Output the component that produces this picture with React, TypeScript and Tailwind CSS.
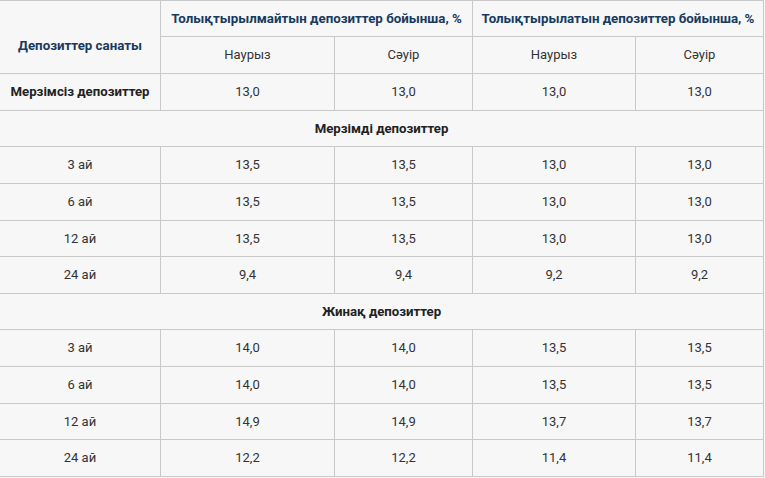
import React from "react";

const rowsA = [
  ["3 ай", "13,5", "13,5", "13,0", "13,0"],
  ["6 ай", "13,5", "13,5", "13,0", "13,0"],
  ["12 ай", "13,5", "13,5", "13,0", "13,0"],
  ["24 ай", "9,4", "9,4", "9,2", "9,2"],
];
const rowsB = [
  ["3 ай", "14,0", "14,0", "13,5", "13,5"],
  ["6 ай", "14,0", "14,0", "13,5", "13,5"],
  ["12 ай", "14,9", "14,9", "13,7", "13,7"],
  ["24 ай", "12,2", "12,2", "11,4", "11,4"],
];

const cell = "flex items-center justify-center border-r border-b border-[#c9c9c9] text-center";

function DataRow({ r }: { r: string[] }) {
  return (
    <>
      {r.map((v, i) => (
        <div key={i} className={`${cell} text-[#333333]`}>
          {v}
        </div>
      ))}
    </>
  );
}

export default function App() {
  return (
    <div className="w-[765px] h-[478px] bg-[#f7f7f7]" style={{ fontFamily: "Roboto, 'Noto Sans', sans-serif" }}>
      <div
        className="grid w-[764px] border-t border-[#c9c9c9] text-[13px] bg-[#f7f7f7]"
        style={{
          gridTemplateColumns: "161px 174px 138px 163px 128px",
          gridTemplateRows: "36px 37px 37px 36px 37px 37px 36px 37px 36px 37px 37px 36px 37px",
        }}
      >
        <div className={`${cell} row-span-2 font-bold text-[13.3px] text-[#173a5e] pt-[17px]`}>Депозиттер санаты</div>
        <div className={`${cell} col-span-2 font-bold text-[13.3px] text-[#173a5e]`}>Толықтырылмайтын депозиттер бойынша, %</div>
        <div className={`${cell} col-span-2 font-bold text-[13.3px] text-[#173a5e]`}>Толықтырылатын депозиттер бойынша, %</div>
        <div className={`${cell} text-[#333333]`}>Наурыз</div>
        <div className={`${cell} text-[#333333]`}>Сәуір</div>
        <div className={`${cell} text-[#333333]`}>Наурыз</div>
        <div className={`${cell} text-[#333333]`}>Сәуір</div>

        <div className={`${cell} font-bold text-[13.2px] text-[#222222]`}>Мерзімсіз депозиттер</div>
        <div className={`${cell} text-[#333333]`}>13,0</div>
        <div className={`${cell} text-[#333333]`}>13,0</div>
        <div className={`${cell} text-[#333333]`}>13,0</div>
        <div className={`${cell} text-[#333333]`}>13,0</div>

        <div className={`${cell} col-span-5 font-bold text-[13.2px] text-[#222222]`}>Мерзімді депозиттер</div>
        {rowsA.map((r, i) => (
          <DataRow key={"a" + i} r={r} />
        ))}

        <div className={`${cell} col-span-5 font-bold text-[13.2px] text-[#222222]`}>Жинақ депозиттер</div>
        {rowsB.map((r, i) => (
          <DataRow key={"b" + i} r={r} />
        ))}
      </div>
    </div>
  );
}
